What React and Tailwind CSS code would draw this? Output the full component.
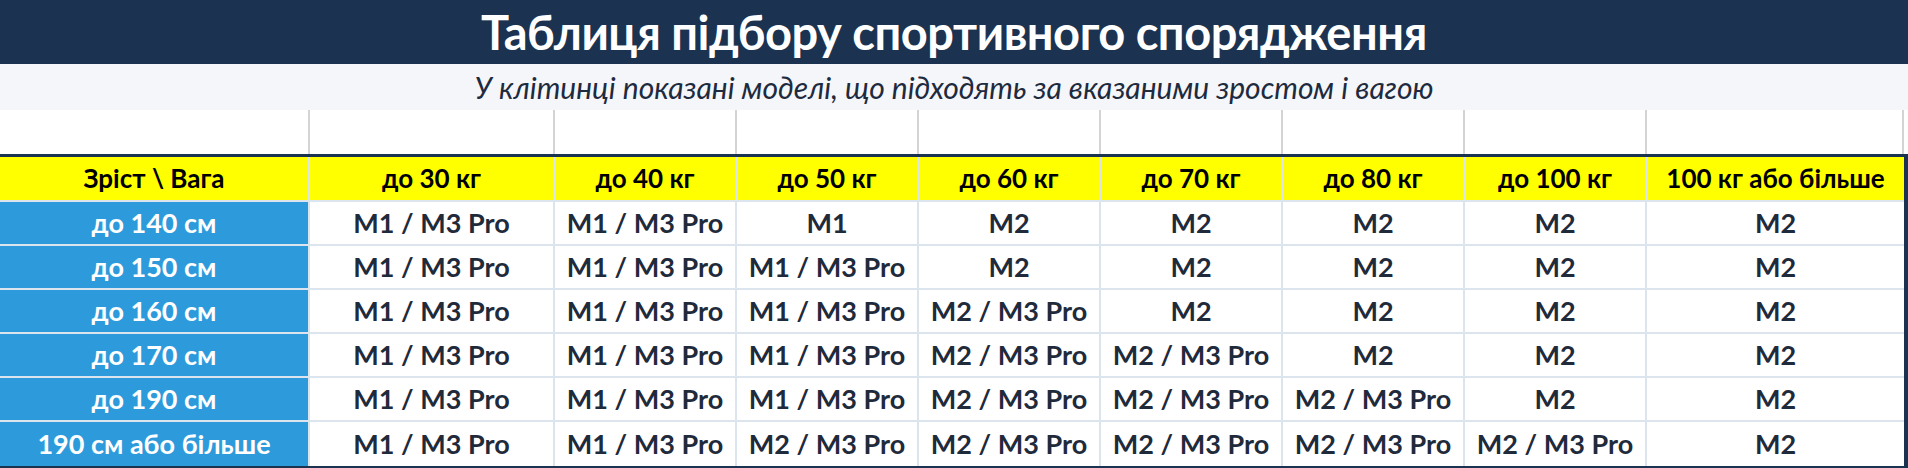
const weights = ['до 30 кг', 'до 40 кг', 'до 50 кг', 'до 60 кг', 'до 70 кг', 'до 80 кг', 'до 100 кг', '100 кг або більше'];

const rows = [
  { h: 'до 140 см', v: ['M1 / M3 Pro', 'M1 / M3 Pro', 'M1', 'M2', 'M2', 'M2', 'M2', 'M2'] },
  { h: 'до 150 см', v: ['M1 / M3 Pro', 'M1 / M3 Pro', 'M1 / M3 Pro', 'M2', 'M2', 'M2', 'M2', 'M2'] },
  { h: 'до 160 см', v: ['M1 / M3 Pro', 'M1 / M3 Pro', 'M1 / M3 Pro', 'M2 / M3 Pro', 'M2', 'M2', 'M2', 'M2'] },
  { h: 'до 170 см', v: ['M1 / M3 Pro', 'M1 / M3 Pro', 'M1 / M3 Pro', 'M2 / M3 Pro', 'M2 / M3 Pro', 'M2', 'M2', 'M2'] },
  { h: 'до 190 см', v: ['M1 / M3 Pro', 'M1 / M3 Pro', 'M1 / M3 Pro', 'M2 / M3 Pro', 'M2 / M3 Pro', 'M2 / M3 Pro', 'M2', 'M2'] },
  { h: '190 см або більше', v: ['M1 / M3 Pro', 'M1 / M3 Pro', 'M2 / M3 Pro', 'M2 / M3 Pro', 'M2 / M3 Pro', 'M2 / M3 Pro', 'M2 / M3 Pro', 'M2'] },
];

const cols = 'grid grid-cols-[310px_245px_182px_182px_182px_182px_182px_182px_257px]';

export default function App() {
  return (
    <div className="w-[1908px] h-[468px] overflow-hidden bg-white" style={{ fontFamily: 'Lato, "Noto Sans", sans-serif' }}>
      {/* Title */}
      <div className="h-[64px] bg-[#1b3350] flex items-center justify-center">
        <h1 className="text-white font-bold text-[47px] leading-none tracking-[-0.01em]">Таблиця підбору спортивного спорядження</h1>
      </div>

      {/* Subtitle */}
      <div className="h-[46px] bg-[#f5f6fa] flex items-center justify-center">
        <p className="italic text-[#1e2b3f] text-[30px] leading-none">У клітинці показані моделі, що підходять за вказаними зростом і вагою</p>
      </div>

      {/* Empty spacer row with sheet gridlines */}
      <div className={`${cols} h-[44px]`}>
        {Array.from({ length: 9 }).map((_, i) => (
          <div key={i} className="border-r-2 border-[#d4d4d4]" />
        ))}
      </div>

      {/* Table */}
      <div className="w-[1908px] border-t-[3px] border-r-4 border-b-2 border-[#1b3350]">
        <div className={`${cols} h-[45px]`}>
          <div className="bg-[#ffff00] border-r-2 border-b-2 border-[#dce4ee] flex items-center justify-center text-black font-bold text-[26px]">Зріст \ Вага</div>
          {weights.map((w, i) => (
            <div key={w} className={`bg-[#ffff00] border-b-2 border-[#dce4ee] flex items-center justify-center text-black font-bold text-[26px] ${i < 7 ? 'border-r-2' : ''}`}>{w}</div>
          ))}
        </div>
        {rows.map((r, ri) => (
          <div key={r.h} className={`${cols} h-[44px]`}>
            <div className={`bg-[#2d9bdb] border-r-2 border-[#dce4ee] flex items-center justify-center text-white font-bold text-[27px] ${ri < 5 ? 'border-b-2' : ''}`}>{r.h}</div>
            {r.v.map((v, i) => (
              <div key={i} className={`bg-white border-[#dce4ee] flex items-center justify-center text-[#1f2a3b] font-bold text-[27px] ${i < 7 ? 'border-r-2' : ''} ${ri < 5 ? 'border-b-2' : ''}`}>{v}</div>
            ))}
          </div>
        ))}
      </div>
    </div>
  );
}
